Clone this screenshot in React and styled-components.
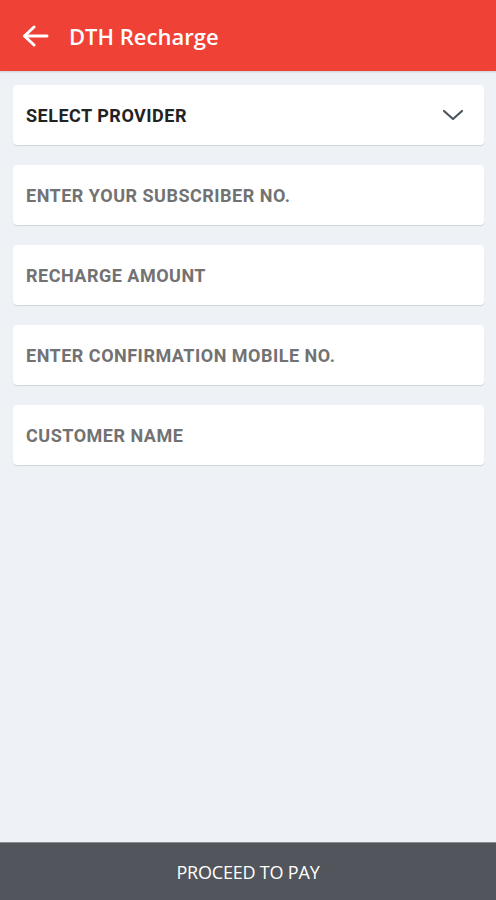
import React from "react";
import styled, { createGlobalStyle } from "styled-components";

const GlobalStyle = createGlobalStyle`
  html, body {
    margin: 0;
    padding: 0;
    background: #eef2f6;
  }
  * { box-sizing: border-box; }
`;

const Page = styled.div`
  display: flex;
  flex-direction: column;
  height: 900px;
  background: #eef2f6;
`;

const Header = styled.header`
  display: flex;
  align-items: center;
  gap: 20px;
  height: 71px;
  padding: 0 0 0 22px;
  background: #ef4136;
  box-shadow: 0 1px 2px rgba(0, 0, 0, 0.15);
`;

const BackButton = styled.button`
  display: flex;
  padding: 0;
  border: none;
  background: none;
  color: #fff;
  cursor: pointer;
  margin-top: 1px;
`;

const Title = styled.h1`
  margin: 0;
  font-family: "Open Sans", sans-serif;
  font-weight: 600;
  font-size: 22px;
  color: #fff;
`;

const Form = styled.div`
  flex: 1;
  display: flex;
  flex-direction: column;
  gap: 20px;
  padding: 14px 12px 0 13px;
`;

const Field = styled.div`
  display: flex;
  align-items: center;
  justify-content: space-between;
  height: 60px;
  padding: 0 20px 0 13px;
  background: #fff;
  border-radius: 4px;
  box-shadow: 0 1px 1px rgba(0, 0, 0, 0.12);
  font-family: Roboto, sans-serif;
  font-weight: 700;
  font-size: 18px;
  letter-spacing: 0.5px;
  color: ${({ $active }) => ($active ? "#222" : "#727272")};
`;

const Footer = styled.button`
  height: 58px;
  border: none;
  border-top: 1px solid #8a8d90;
  background: #52565c;
  color: #fff;
  font-family: "Open Sans", sans-serif;
  font-size: 18px;
  letter-spacing: -0.2px;
  cursor: pointer;
`;

const fields = [
  "ENTER YOUR SUBSCRIBER NO.",
  "RECHARGE AMOUNT",
  "ENTER CONFIRMATION MOBILE NO.",
  "CUSTOMER NAME",
];

export default function App() {
  return (
    <Page>
      <GlobalStyle />
      <Header>
        <BackButton aria-label="Back">
          <svg width="27" height="22" viewBox="0 0 27 22" fill="none" stroke="currentColor" strokeWidth="3" strokeLinecap="round" strokeLinejoin="round">
            <path d="M25 11H3" />
            <path d="M12 2L2.5 11L12 20" />
          </svg>
        </BackButton>
        <Title>DTH Recharge</Title>
      </Header>
      <Form>
        <Field $active>
          SELECT PROVIDER
          <svg width="22" height="12" viewBox="0 0 22 12" fill="none" stroke="#4b5560" strokeWidth="2.2" strokeLinecap="round" strokeLinejoin="round">
            <path d="M2 2l9 8 9-8" />
          </svg>
        </Field>
        {fields.map((f) => (
          <Field key={f}>{f}</Field>
        ))}
      </Form>
      <Footer>PROCEED TO PAY</Footer>
    </Page>
  );
}
